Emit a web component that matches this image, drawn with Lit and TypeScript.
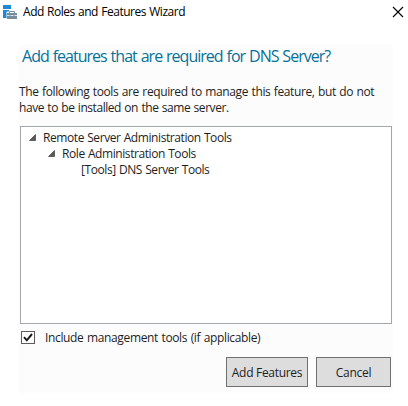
import { LitElement, html, css, svg } from "lit";
import { customElement } from "lit/decorators.js";

@customElement("app-root")
export class AppRoot extends LitElement {
  static styles = css`
    :host {
      display: block;
      width: 408px;
      height: 406px;
      overflow: hidden;
      background: #fff;
      color: #1e1e1e;
      font: 12px/16px "Open Sans", "Noto Sans", sans-serif;
      white-space: nowrap;
    }
    * { box-sizing: border-box; }
    svg { display: block; flex: none; }
    .titlebar {
      display: flex;
      align-items: flex-start;
      height: 45px;
      padding: 4px 4px 0 3px;
      color: #000;
    }
    .title { margin: 0 0 0 5px; flex: 1; letter-spacing: -0.46px; word-spacing: 0.5px; }
    .close { margin-top: 2px; }
    .panel {
      display: flex;
      flex-direction: column;
      width: 374px;
      height: 348px;
      margin-left: 19px;
      background: #fcfcfc;
    }
    .heading {
      margin: 0 0 0 3px;
      padding-top: 1px;
      font-size: 16px;
      line-height: 20px;
      font-weight: 400;
      color: #067299;
      letter-spacing: -0.98px;
      word-spacing: 0.7px;
    }
    .intro { margin: 18px 0 0; letter-spacing: -0.38px; word-spacing: 0.7px; }
    .intro .last { letter-spacing: -0.45px; }
    .tree {
      width: 372px;
      height: 198px;
      margin: 10px 0 0 1px;
      padding: 3px 0 0 8px;
      border: 1px solid #a5a8ab;
      background: #fff;
      list-style: none;
    }
    .row { display: flex; height: 16px; letter-spacing: -0.42px; word-spacing: 0.5px; }
    .row svg { margin: 4px 7px 0 0; }
    .level1 { padding-left: 19px; }
    .level2 { padding-left: 52px; }
    .option { display: flex; margin: 6px 0 0 2px; gap: 10px; height: 16px; }
    .option svg { margin-top: 1px; }
    .option span { letter-spacing: -0.35px; word-spacing: 0.7px; }
    .actions { display: flex; gap: 8px; margin: 11px 2px 0 207px; }
    .button {
      height: 30px;
      padding: 2px 0 0;
      border: 1px solid #707070;
      border-radius: 0;
      background: #ddd;
      color: #1e1e1e;
      font: inherit;
      letter-spacing: -0.3px;
    }
    .add { width: 82px; }
    .cancel { width: 75px; }
  `;

  private arrow() {
    return html`<svg width="7" height="7" viewBox="0 0 7 7">
      ${svg`<path d="M6.5 0.5V6.5H0.5Z" fill="#595959" stroke="#404040" stroke-width=".7"/>`}
    </svg>`;
  }

  render() {
    return html`
      <div class="titlebar">
        <svg width="15" height="16" viewBox="0 0 15 16">
          <path d="M0 1H8V5H0ZM0 6H6V7.5H3.5V14H0Z" fill="#1e8ad6" />
          <path d="M6.5 9V7.5H11.5V9" fill="none" stroke="#758d9e" />
          <path d="M4 9H14V15H4Z" fill="#758d9e" />
          <path d="M4 11.5H6.5M7.5 11.5H10.5M11.5 11.5H14" stroke="#dce4e9" />
        </svg>
        <span class="title">Add Roles and Features Wizard</span>
        <svg class="close" width="12" height="12" viewBox="0 0 12 12">
          <path d="M1 1L11 11M11 1L1 11" stroke="#000" stroke-width="1.1" />
        </svg>
      </div>
      <main class="panel">
        <h1 class="heading">Add features that are required for DNS Server?</h1>
        <p class="intro">The following tools are required to manage this feature, but do not<br /><span class="last">have to be installed on the same server.</span></p>
        <ul class="tree">
          <li class="row level0">${this.arrow()}<span>Remote Server Administration Tools</span></li>
          <li class="row level1">${this.arrow()}<span>Role Administration Tools</span></li>
          <li class="row level2"><span>[Tools] DNS Server Tools</span></li>
        </ul>
        <label class="option">
          <svg width="14" height="13" viewBox="0 0 14 13">
            <rect x=".5" y=".5" width="13" height="12" fill="#fff" stroke="#5c5c5c" />
            <path d="M3 6.2L5.8 9.3L11 3" fill="none" stroke="#1a1a1a" stroke-width="2" />
          </svg>
          <span>Include management tools (if applicable)</span>
        </label>
        <div class="actions">
          <button class="button add">Add Features</button>
          <button class="button cancel">Cancel</button>
        </div>
      </main>
    `;
  }
}
